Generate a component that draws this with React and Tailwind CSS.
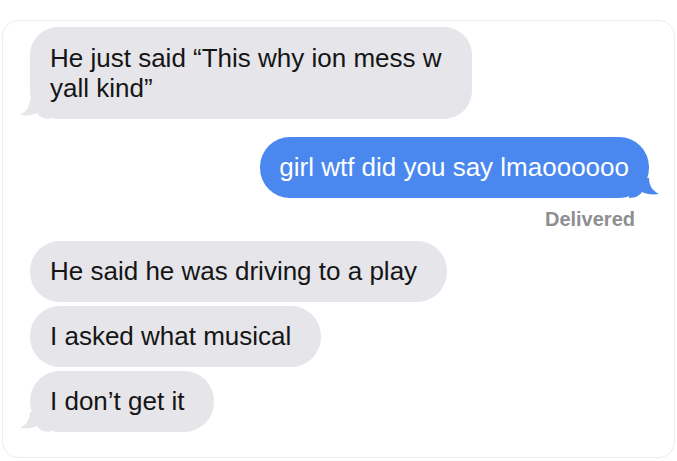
import React from "react";

const Tail = ({ color, flip }) => (
  <svg
    width="30"
    height="20"
    viewBox="0 0 30 20"
    className={
      flip
        ? "absolute -right-[10px] bottom-0 -scale-x-100"
        : "absolute -left-[10px] bottom-0"
    }
  >
    <path
      d="M10 0 C10 8 6 13 0 16 C7 17 13 16 17 14 C19 17 23 20 30 20 L30 0 Z"
      fill={color}
    />
  </svg>
);

const Received = ({ children, tail }) => (
  <div className="relative self-start rounded-[30px] bg-[#e5e5ea] py-[16px] pl-5 pr-[30px] text-[26px] leading-[29px] text-[#151515]">
    {tail && <Tail color="#e5e5ea" />}
    <span className="relative">{children}</span>
  </div>
);

export default function App() {
  return (
    <div className="min-h-[461px] w-[677px] bg-white pt-5 pl-[2px] pr-[2px] font-['Liberation_Sans',Arial,sans-serif]">
      <div className="flex h-[438px] flex-col rounded-2xl border border-[#ececec] px-[27px] pt-[6px]">
        {/* first incoming */}
        <div className="relative self-start rounded-[28px] bg-[#e5e5ea] py-[16px] pl-5 pr-[30px] text-[26px] leading-[30px] text-[#151515]">
          <Tail color="#e5e5ea" />
          <span className="relative">
            He just said “This why ion mess w
            <br />
            yall kind”
          </span>
        </div>

        {/* outgoing */}
        <div className="relative mt-[18px] self-end mr-[-2px] rounded-[30px] bg-[#4a88ef] py-[16px] pl-[19px] pr-5 text-[26px] leading-[29px] text-white">
          <Tail color="#4a88ef" flip />
          <span className="relative">girl wtf did you say lmaoooooo</span>
        </div>
        <div className="mt-[9px] self-end pr-[12px] text-[20px] font-bold leading-[24px] text-[#8e8e93]">
          Delivered
        </div>

        {/* incoming group */}
        <div className="mt-[10px] flex flex-col gap-1">
          <Received>He said he was driving to a play</Received>
          <Received>I asked what musical</Received>
          <Received tail>I don’t get it</Received>
        </div>
      </div>
    </div>
  );
}
